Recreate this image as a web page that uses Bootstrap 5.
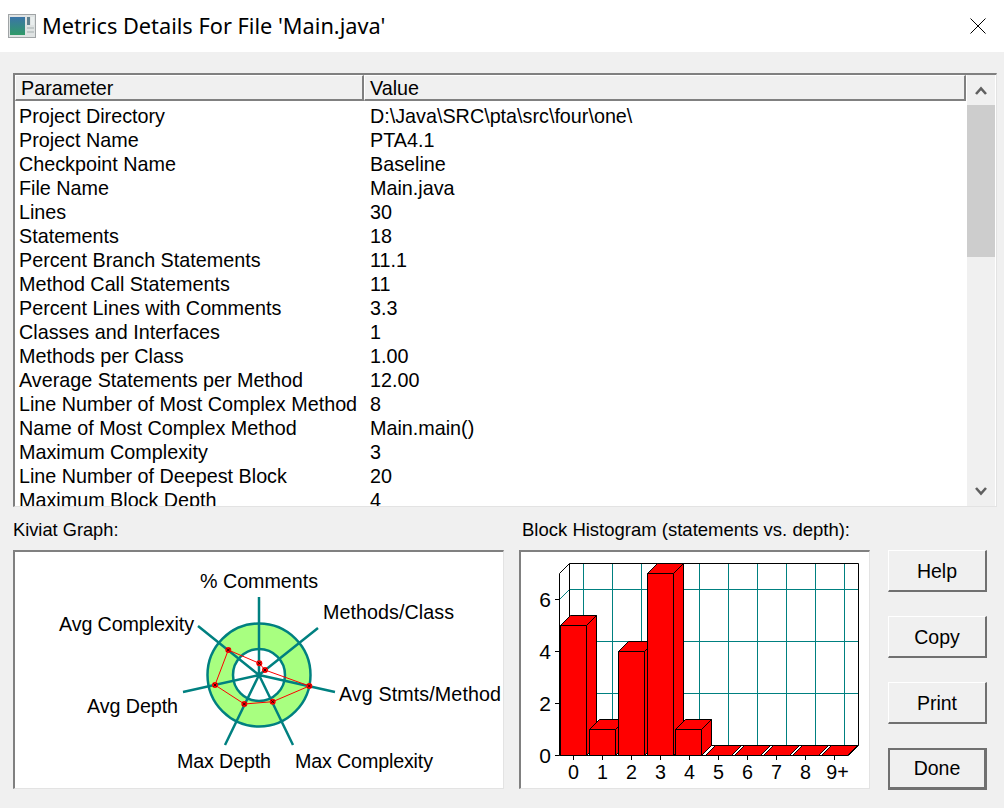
<!DOCTYPE html>
<html lang="en">
<head>
<meta charset="utf-8">
<title>Metrics Details For File 'Main.java'</title>
<link href="https://cdn.jsdelivr.net/npm/bootstrap@5.3.0/dist/css/bootstrap.min.css" rel="stylesheet">
<style>
html, body { height: 100%; }
body { background: #f0f0f0; color: #000; font-family: "Liberation Sans", Arial, sans-serif; overflow: hidden; }
.win-title { height: 52px; background: #fff; padding: 0 18px 0 8px; gap: 6px; }
.win-title h1 { font: 400 21.75px/1 "Noto Sans", sans-serif; margin: 0; color: #000; }
.sunken { border-style: solid; border-color: #808080 #e3e3e3 #e3e3e3 #808080; border-width: 2px 1px 1px 2px; background: #fff; }
.metrics-box { width: 984px; height: 434px; margin: 21px 0 0 13px; overflow: hidden; }
.metrics-scroll { width: 952px; flex: none; }
.metrics-table { table-layout: fixed; width: 951px; margin: 0; border-collapse: separate; border-spacing: 0; font-size: 19.75px; line-height: 24px; }
.metrics-table > :not(caption) > * > * { padding: 0 0 0 4px; border: 0; color: #000; background: #fff; box-shadow: none; white-space: nowrap; }
.metrics-table > thead > tr > th { font-weight: 400; height: 26px; padding: 1px 0 0 5px; background: #f0f0f0; border-style: solid; border-color: #fff #808080 #808080 #fff; border-width: 1px 2px 2px 1px; line-height: 21px; }
.metrics-table > tbody > tr > td:last-child { padding-left: 6px; }
.metrics-table > tbody > tr:first-child > td { padding-top: 3px; }
.col-param { width: 349px; }
.fake-scroll { width: 28px; background: #f0f0f0; }
.scroll-btn { height: 30px; flex: none; }
.scroll-thumb { height: 152px; background: #cdcdcd; flex: none; }
.scroll-track { flex: 1; }
.lower { margin: 0 0 0 13px; }
.panel-label { font-size: 18.5px; line-height: 24px; margin: 11px 0 8px; }
.kiviat-col { width: 491px; }
.kiviat-col .panel-label { font-size: 18.25px; }
.hist-col { width: 351px; margin-left: 15px; }
.hist-col .panel-label { padding-left: 3px; }
.chart-box { height: 239px; }
.chart-box svg { display: block; width: 100%; height: 100%; }
.chart-box text { font-family: "Liberation Sans", Arial, sans-serif; font-size: 19.7px; fill: #000; }
.chart-box .axis-y text { font-size: 21px; }
.action-col { width: 99px; margin-left: 18px; padding-top: 43px; gap: 24px; }
.action-btn { height: 42px; width: 99px; padding: 2px 0 0; border-radius: 0; color: #000; background: #f0f0f0; font-size: 19.5px; line-height: 1; border-style: solid; border-color: #fff #707070 #707070 #fff; border-width: 1px 2px 2px 1px; }
.action-btn:hover { color: #000; background: #f0f0f0; border-color: #fff #707070 #707070 #fff; }
.action-default { border-color: #707070; border-width: 2px 3px 3px 2px; padding-top: 1px; }
</style>
</head>
<body>
<header class="win-title d-flex align-items-center">
  <svg width="28" height="24" viewBox="0 0 28 24" class="flex-none" aria-hidden="true">
    <defs><linearGradient id="ig" x1="0" y1="0" x2="0" y2="1"><stop offset="0" stop-color="#3b74a8"/><stop offset="1" stop-color="#2f9a68"/></linearGradient></defs>
    <rect x=".5" y=".5" width="27" height="23" fill="#dfe3e3" stroke="#a0a4a6"/>
    <rect x="2" y="3" width="15" height="18" fill="url(#ig)"/>
    <rect x="19" y="3" width="3" height="8" fill="#5d7f8d"/>
    <rect x="23" y="3" width="3" height="8" fill="#e9eeee"/>
    <rect x="19" y="13" width="7" height="2" fill="#c2c9c9"/>
    <rect x="19" y="17" width="7" height="2" fill="#c2c9c9"/>
  </svg>
  <h1 class="flex-grow-1">Metrics Details For File 'Main.java'</h1>
  <svg width="16" height="16" viewBox="0 0 16 16" aria-label="Close"><path d="M.5.5l15 15M15.5.5l-15 15" stroke="#000" fill="none"/></svg>
</header>

<main>
  <section class="sunken metrics-box d-flex">
    <div class="metrics-scroll">
      <table class="table metrics-table">
        <colgroup><col class="col-param"><col></colgroup>
        <thead><tr><th>Parameter</th><th>Value</th></tr></thead>
        <tbody>
          <tr><td>Project Directory</td><td>D:\Java\SRC\pta\src\four\one\</td></tr>
          <tr><td>Project Name</td><td>PTA4.1</td></tr>
          <tr><td>Checkpoint Name</td><td>Baseline</td></tr>
          <tr><td>File Name</td><td>Main.java</td></tr>
          <tr><td>Lines</td><td>30</td></tr>
          <tr><td>Statements</td><td>18</td></tr>
          <tr><td>Percent Branch Statements</td><td>11.1</td></tr>
          <tr><td>Method Call Statements</td><td>11</td></tr>
          <tr><td>Percent Lines with Comments</td><td>3.3</td></tr>
          <tr><td>Classes and Interfaces</td><td>1</td></tr>
          <tr><td>Methods per Class</td><td>1.00</td></tr>
          <tr><td>Average Statements per Method</td><td>12.00</td></tr>
          <tr><td>Line Number of Most Complex Method</td><td>8</td></tr>
          <tr><td>Name of Most Complex Method</td><td>Main.main()</td></tr>
          <tr><td>Maximum Complexity</td><td>3</td></tr>
          <tr><td>Line Number of Deepest Block</td><td>20</td></tr>
          <tr><td>Maximum Block Depth</td><td>4</td></tr>
        </tbody>
      </table>
    </div>
    <div class="fake-scroll d-flex flex-column">
      <div class="scroll-btn d-flex align-items-center justify-content-center">
        <svg width="12" height="9" viewBox="0 0 12 9"><path d="M1 8l5-5.500L11 8" stroke="#606060" stroke-width="2.600" fill="none"/></svg>
      </div>
      <div class="scroll-thumb"></div>
      <div class="scroll-track"></div>
      <div class="scroll-btn d-flex align-items-center justify-content-center">
        <svg width="12" height="9" viewBox="0 0 12 9"><path d="M1 1l5 5.500L11 1" stroke="#606060" stroke-width="2.600" fill="none"/></svg>
      </div>
    </div>
  </section>

  <section class="lower d-flex">
    <div class="kiviat-col">
      <div class="panel-label">Kiviat Graph:</div>
      <div class="sunken chart-box">
        <svg viewBox="15 552 488 236" aria-label="Kiviat graph">
          <circle cx="259" cy="675" r="51.500" fill="#a8ff80"/>
          <circle cx="259" cy="675" r="26" fill="#fff"/>
          <g fill="none" stroke="#008080" stroke-width="2.500">
            <circle cx="259" cy="675" r="51.500"/>
            <circle cx="259" cy="675" r="26"/>
            <path d="M259 675V597M259 675L318 628M259 675L335 692M259 675L293 745M259 675L225 745M259 675L183 692M259 675L198 626"/>
          </g>
          <polygon points="228.300,650 259.300,663.300 265,670 309.300,686 272.700,701.700 244.300,704 215,685" fill="none" stroke="#f00"/>
          <g fill="#f00">
            <circle cx="228.300" cy="650" r="3"/>
            <circle cx="259.300" cy="663.300" r="3"/>
            <circle cx="265" cy="670" r="3"/>
            <circle cx="309.300" cy="686" r="3"/>
            <circle cx="272.700" cy="701.700" r="3"/>
            <circle cx="244.300" cy="704" r="3"/>
            <circle cx="215" cy="685" r="3"/>
          </g>
          <path d="M226.800 648.500l3 3M229.800 648.500l-3 3M257.800 661.800l3 3M260.800 661.800l-3 3M263.500 668.500l3 3M266.500 668.500l-3 3M307.800 684.500l3 3M310.800 684.500l-3 3M271.200 700.200l3 3M274.200 700.200l-3 3M242.800 702.500l3 3M245.800 702.500l-3 3M213.500 683.500l3 3M216.500 683.500l-3 3" stroke="#000" stroke-width=".8" fill="none"/>
          <text x="200" y="588" textLength="118">% Comments</text>
          <text x="323" y="619" textLength="131">Methods/Class</text>
          <text x="339" y="701" textLength="162">Avg Stmts/Method</text>
          <text x="295" y="768" textLength="138">Max Complexity</text>
          <text x="177" y="768" textLength="94">Max Depth</text>
          <text x="87" y="713" textLength="91">Avg Depth</text>
          <text x="59" y="631" textLength="135">Avg Complexity</text>
        </svg>
      </div>
    </div>

    <div class="hist-col">
      <div class="panel-label">Block Histogram (statements vs. depth):</div>
      <div class="sunken chart-box">
        <svg viewBox="521 552 348 236" aria-label="Block histogram">
          <g fill="none" stroke="#008080">
            <path d="M569.500 589.500H858M569.500 641.500H858M569.500 693.500H858"/>
            <path d="M583.500 563.500V745M612.500 563.500V745M641.500 563.500V745M670.500 563.500V745M699.500 563.500V745M728.500 563.500V745M757.500 563.500V745M786.500 563.500V745M815.500 563.500V745M844.500 563.500V745"/>
            <path d="M559.500 599.500L569.500 589.500M559.500 651.500L569.500 641.500M559.500 703.500L569.500 693.500"/>
          </g>
          <path d="M569.500 745.500V563.500H858.500V745.500L848.500 755.500H559.500V573.500L569.500 563.500M569.500 745.500H858.500M569.500 745.500L559.500 755.500" fill="none" stroke="#000"/>
          <path d="M555 599.500h4M555 651.500h4M555 703.500h4M555 755.500h4M573.500 756v4M602.500 756v4M631.500 756v4M660.500 756v4M689.500 756v4M718.500 756v4M747.500 756v4M776.500 756v4M805.500 756v4M834.500 756v4" stroke="#000" fill="none"/>
          <g fill="#f00" stroke="#000">
            <polygon points="705.500,755.500 715.500,745.500 741.500,745.500 731.500,755.500"/>
            <polygon points="734.500,755.500 744.500,745.500 770.500,745.500 760.500,755.500"/>
            <polygon points="763.500,755.500 773.500,745.500 799.500,745.500 789.500,755.500"/>
            <polygon points="792.500,755.500 802.500,745.500 828.500,745.500 818.500,755.500"/>
            <polygon points="821.500,755.500 831.500,745.500 857.500,745.500 847.500,755.500"/>

            <rect x="560.500" y="625.500" width="26" height="130"/>
            <polygon points="560.500,625.500 570.500,615.500 596.500,615.500 586.500,625.500"/>
            <polygon points="586.500,625.500 596.500,615.500 596.500,745.500 586.500,755.500"/>

            <rect x="589.500" y="729.500" width="26" height="26"/>
            <polygon points="589.500,729.500 599.500,719.500 625.500,719.500 615.500,729.500"/>
            <polygon points="615.500,729.500 625.500,719.500 625.500,745.500 615.500,755.500"/>

            <rect x="618.500" y="651.500" width="26" height="104"/>
            <polygon points="618.500,651.500 628.500,641.500 654.500,641.500 644.500,651.500"/>
            <polygon points="644.500,651.500 654.500,641.500 654.500,745.500 644.500,755.500"/>

            <rect x="647.500" y="573.500" width="26" height="182"/>
            <polygon points="647.500,573.500 657.500,563.500 683.500,563.500 673.500,573.500"/>
            <polygon points="673.500,573.500 683.500,563.500 683.500,745.500 673.500,755.500"/>

            <rect x="675.500" y="729.500" width="26" height="26"/>
            <polygon points="675.500,729.500 685.500,719.500 711.500,719.500 701.500,729.500"/>
            <polygon points="701.500,729.500 711.500,719.500 711.500,745.500 701.500,755.500"/>
          </g>
          <g class="axis-y" text-anchor="end">
            <text x="551" y="607">6</text>
            <text x="551" y="659">4</text>
            <text x="551" y="711">2</text>
            <text x="551" y="763">0</text>
          </g>
          <g text-anchor="middle">
            <text x="573.500" y="779">0</text>
            <text x="602.500" y="779">1</text>
            <text x="631.500" y="779">2</text>
            <text x="660.500" y="779">3</text>
            <text x="689.500" y="779">4</text>
            <text x="718.500" y="779">5</text>
            <text x="747.500" y="779">6</text>
            <text x="776.500" y="779">7</text>
            <text x="805.500" y="779">8</text>
            <text x="837.500" y="779">9+</text>
          </g>
        </svg>
      </div>
    </div>

    <div class="action-col d-flex flex-column">
      <button type="button" class="btn action-btn">Help</button>
      <button type="button" class="btn action-btn">Copy</button>
      <button type="button" class="btn action-btn">Print</button>
      <button type="button" class="btn action-btn action-default">Done</button>
    </div>
  </section>
</main>
</body>
</html>
